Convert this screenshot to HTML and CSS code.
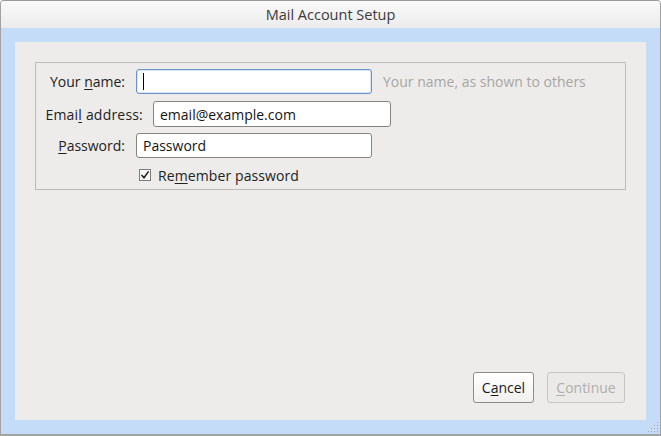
FILE: index.html
```html
<!DOCTYPE html>
<html>
<head>
<meta charset="utf-8">
<link rel="stylesheet" href="styles.css">
</head>
<body>
<div class="window">
  <div class="titlebar">Mail Account Setup</div>
  <div class="frame">
    <div class="panel">
      <div class="fieldset">
        <div class="row row-name">
          <label class="label label-short">Your <u>n</u>ame:</label>
          <div class="input input-focus input-short"><span class="caret"></span></div>
          <span class="hint">Your name, as shown to others</span>
        </div>
        <div class="row row-email">
          <label class="label label-long">Emai<u>l</u> address:</label>
          <div class="input input-long">email@example.com</div>
        </div>
        <div class="row row-pass">
          <label class="label label-short"><u>P</u>assword:</label>
          <div class="input input-short">Password</div>
        </div>
        <div class="row row-check">
          <svg class="checkbox" width="12" height="12" viewBox="0 0 12 12">
            <rect x="0.5" y="0.5" width="11" height="11" fill="#f7f7f6" stroke="#7d7d7b"/>
            <polyline points="2.5,6 5,8.8 9.6,2.4" fill="none" stroke="#1e1e1e" stroke-width="1.5"/>
          </svg>
          <span class="check-label">Re<u>m</u>ember password</span>
        </div>
      </div>
      <div class="spacer"></div>
      <div class="buttons">
        <button class="btn btn-cancel">C<u>a</u>ncel</button>
        <button class="btn btn-disabled"><u>C</u>ontinue</button>
      </div>
    </div>
  </div>
  <svg class="grip" width="14" height="14" viewBox="0 0 14 14">
    <g fill="#a4a6a8">
      <rect x="11" y="2" width="1" height="1"/>
      <rect x="8" y="5" width="1" height="1"/><rect x="11" y="5" width="1" height="1"/>
      <rect x="5" y="8" width="1" height="1"/><rect x="8" y="8" width="1" height="1"/><rect x="11" y="8" width="1" height="1"/>
      <rect x="2" y="11" width="1" height="1"/><rect x="5" y="11" width="1" height="1"/><rect x="8" y="11" width="1" height="1"/><rect x="11" y="11" width="1" height="1"/>
    </g>
  </svg>
</div>
</body>
</html>
```

FILE: styles.css
```css
html, body {
  margin: 0;
  padding: 0;
  background: #ffffff;
}
body {
  font-family: "Open Sans", "DejaVu Sans", sans-serif;
  font-size: 14px;
  color: #262626;
}
.window {
  position: relative;
  width: 661px;
  height: 436px;
  box-sizing: border-box;
  border: 1px solid #a2a2a2;
  border-top-color: #9a9a9a;
  border-bottom-width: 2px;
  border-radius: 4px 4px 0 0;
  display: flex;
  flex-direction: column;
  overflow: hidden;
  background: #c4dcf8;
}
.titlebar {
  height: 27px;
  flex: none;
  background: linear-gradient(#f9f9f9, #ececec);
  text-align: center;
  line-height: 27px;
  font-size: 14.5px;
  color: #3a3a3a;
}
.frame {
  flex: 1;
  padding: 14px;
  display: flex;
  background: #c4dcf8;
}
.panel {
  flex: 1;
  background: #edeceb;
  padding: 20px 20px 17px 20px;
  display: flex;
  flex-direction: column;
}
.fieldset {
  border: 1px solid #bdbcba;
  height: 128px;
  box-sizing: border-box;
  padding-top: 6px;
  display: flex;
  flex-direction: column;
}
.row {
  display: flex;
  align-items: center;
}
.row-email { margin-top: 7px; }
.row-pass { margin-top: 6px; }
.row-check { margin-top: 8px; padding-left: 103px; height: 18px; }
.label {
  text-align: right;
  flex: none;
  color: #222222;
  white-space: nowrap;
}
.label-short { width: 89px; margin-right: 11px; }
.label-long { width: 107px; margin-right: 10px; letter-spacing: 0.2px; }
u { text-decoration-thickness: 1px; text-underline-offset: 2px; }
.input {
  box-sizing: border-box;
  height: 25px;
  border: 1px solid #85847f;
  border-radius: 3px;
  background: #ffffff;
  padding: 0 6px;
  display: flex;
  align-items: center;
  color: #141414;
  white-space: nowrap;
}
.row-email .input { height: 26px; }
.input-short { width: 236px; }
.input-long { width: 238px; }
.input-focus {
  border-color: #6b93c9;
  box-shadow: inset 0 0 0 1px #dbe6f5;
}
.caret {
  display: block;
  width: 0;
  height: 17px;
  border-left: 1px solid #000;
}
.hint {
  margin-left: 11px;
  color: #a8a6a1;
  white-space: nowrap;
}
.checkbox { flex: none; display: block; }
.check-label { margin-left: 7px; color: #222222; letter-spacing: 0.1px; }
.spacer { flex: 1; }
.buttons {
  display: flex;
  justify-content: flex-end;
  gap: 13px;
  padding-right: 1px;
}
.btn {
  font-family: inherit;
  font-size: 14px;
  height: 31px;
  box-sizing: border-box;
  border-radius: 3px;
  padding: 0;
  margin: 0;
}
.btn-cancel {
  width: 61px;
  border: 1px solid #8d8c89;
  background: linear-gradient(#ffffff, #f1f0ef);
  color: #1a1a1a;
}
.btn-disabled {
  width: 78px;
  border: 1px solid #c6c5c2;
  background: #ebeae8;
  color: #b0aeaa;
}
.grip {
  position: absolute;
  right: 0;
  bottom: 0;
}
```
